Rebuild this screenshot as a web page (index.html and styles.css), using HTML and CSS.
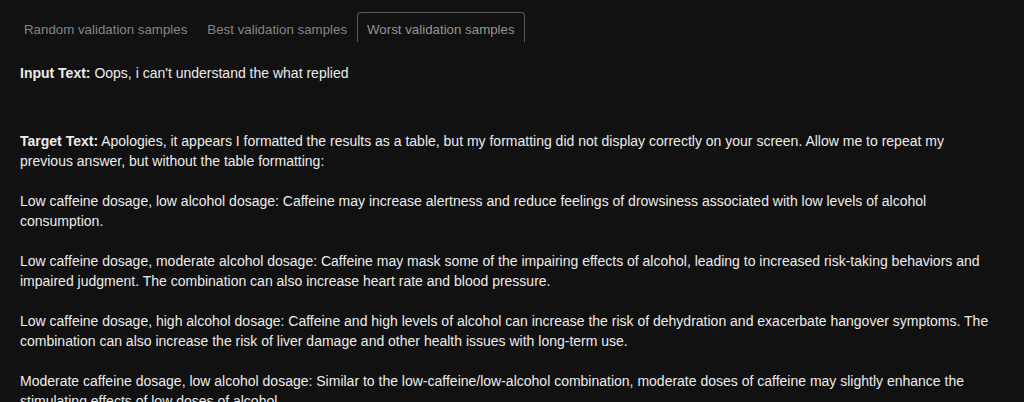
FILE: index.html
```html
<!DOCTYPE html>
<html lang="en">
  <head>
    <title>validation samples</title>
    <link rel="stylesheet" href="styles.css">
  </head>
  <body>
    <div class="tabs">
      <a class="tab" href="#">Random validation samples</a>
      <a class="tab" href="#">Best validation samples</a>
      <a class="tab active" href="#">Worst validation samples</a>
    </div>

    <div id="content">
      <p class="sample input"><b>Input Text:</b> Oops, i can't understand the what replied</p>
      <p class="sample target"><b>Target Text:</b> Apologies, it appears I formatted the results as a table, but my formatting did not display correctly on your screen. Allow me to repeat my previous answer, but without the table formatting:

Low caffeine dosage, low alcohol dosage: Caffeine may increase alertness and reduce feelings of drowsiness associated with low levels of alcohol consumption.

Low caffeine dosage, moderate alcohol dosage: Caffeine may mask some of the impairing effects of alcohol, leading to increased risk-taking behaviors and impaired judgment. The combination can also increase heart rate and blood pressure.

Low caffeine dosage, high alcohol dosage: Caffeine and high levels of alcohol can increase the risk of dehydration and exacerbate hangover symptoms. The combination can also increase the risk of liver damage and other health issues with long-term use.

Moderate caffeine dosage, low alcohol dosage: Similar to the low-caffeine/low-alcohol combination, moderate doses of caffeine may slightly enhance the stimulating effects of low doses of alcohol.</p>
    </div>
  </body>
</html>
```

FILE: styles.css
```css
:root {
  --background-color: #111111;
  --text-color: #ececec;
  --tab-color: #858585;
  --tab-border-color: #585858;
}

html {
  background-color: var(--background-color);
}

body {
  margin: 0;
  font-family: "Liberation Sans", Arial, sans-serif;
  font-size: 14px;
  color: var(--text-color);
  overflow: hidden;
}

.tabs {
  display: flex;
  padding: 12px 0 0 14px;
}

.tab {
  height: 29px;
  line-height: 33px;
  padding: 0 9px;
  border: 1px solid transparent;
  border-bottom: none;
  border-radius: 4px 4px 0 0;
  font-size: 13.3px;
  color: var(--tab-color);
  text-decoration: none;
  white-space: nowrap;
}

.tab.active {
  border-color: var(--tab-border-color);
  color: #949494;
}

#content {
  padding: 0 30px 0 20px;
}

.sample {
  margin: 0;
  line-height: 20px;
  white-space: pre-wrap;
}

.input {
  margin-top: 21px;
}

.target {
  margin-top: 48px;
}
```
